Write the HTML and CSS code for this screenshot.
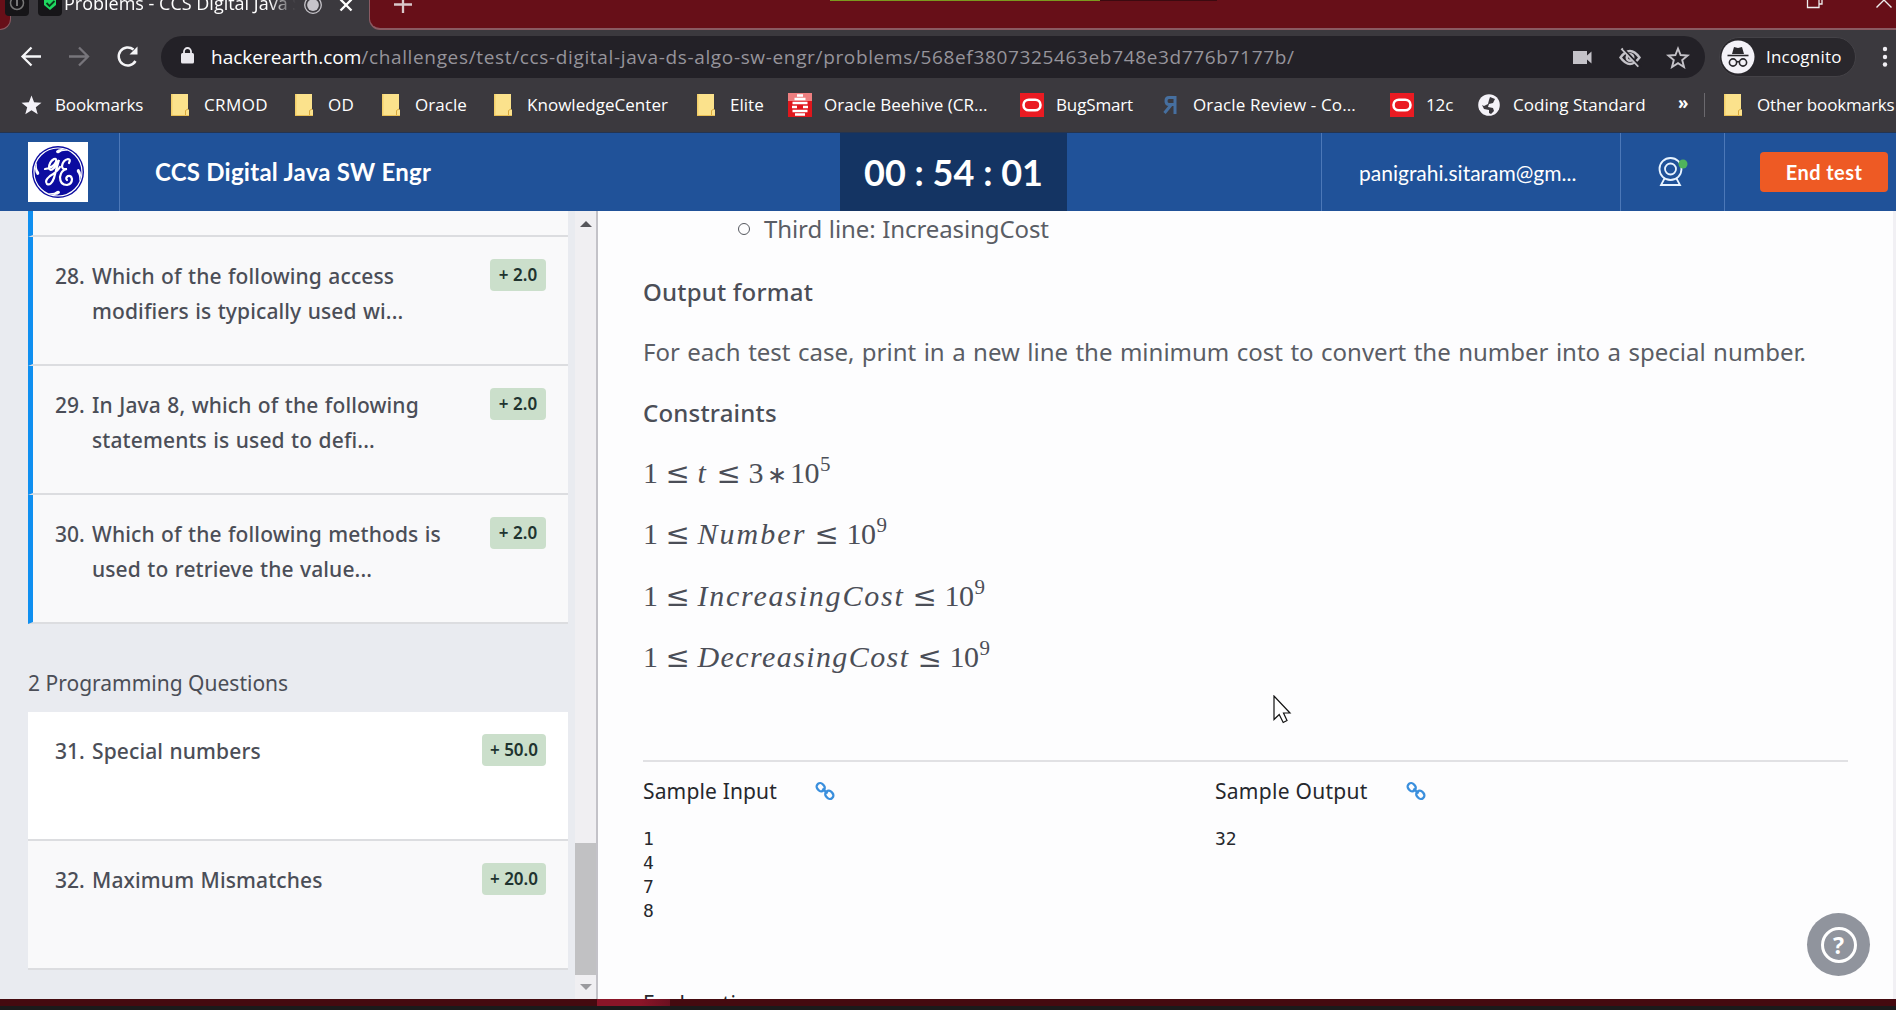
FILE: index.html
```html
<!DOCTYPE html>
<html lang="en">
<head>
<meta charset="utf-8">
<title>Problems - CCS Digital Java SW Engr</title>
<link rel="stylesheet" href="styles.css">
</head>
<body>
<svg class="defs" width="0" height="0" aria-hidden="true">
  <symbol id="folder" viewBox="0 0 24 24"><path d="M3 1h17v15l1 1v6H3z" fill="#fbe28c"/><path d="M3 1h1.500v22H3z" fill="#f3cf6a"/><path d="M3 22h18v1H3z" fill="#e9bf55"/><path d="M17.500 22v-4.500L20 16" fill="none" stroke="#d9a93c"/></symbol>
  <symbol id="oracle" viewBox="0 0 24 24"><path d="M0 0h24v24H0z" fill="#ea1b22"/><rect x="3.500" y="6.700" width="17" height="10.600" rx="5.300" fill="none" stroke="#fff" stroke-width="2.600"/></symbol>
  <symbol id="link" viewBox="0 0 20 20"><g fill="none" stroke="#3a8fdd" stroke-width="2.300"><rect x="2.200" y="1.900" width="7" height="8.600" rx="3.400" transform="rotate(-42 5.700 6.200)"/><rect x="10.800" y="9.500" width="7" height="8.600" rx="3.400" transform="rotate(-42 14.300 13.800)"/><path d="M7.500 7.500l5 5"/></g></symbol>
</svg>

<div class="tabstrip">
  <div class="prev-tab"></div>
  <div class="tab">
    <span class="favicon"><svg width="24" height="24" viewBox="0 0 24 24"><circle cx="12" cy="11" r="6.500" fill="none" stroke="#777" stroke-width="1.500"/><path d="M12 8v6" stroke="#999" stroke-width="1.500"/></svg></span>
    <span class="favicon"><svg width="24" height="24" viewBox="0 0 24 24"><path d="M6 6h12v7l-6 5-6-5z" fill="#1fd860"/><path d="M8.500 11l3 3 5-5" fill="none" stroke="#0b3a1b" stroke-width="1.800"/></svg></span>
    <span class="tab-title">Problems - CCS Digital Java S</span>
    <svg class="rec" width="20" height="20" viewBox="0 0 20 20"><circle cx="10" cy="10" r="8.300" fill="none" stroke="#c6c4ca" stroke-width="1.300"/><circle cx="10" cy="10" r="5.900" fill="#c6c4ca"/></svg>
    <svg class="tab-close" width="14" height="14" viewBox="0 0 14 14"><path d="M1.500 1.500l11 11M12.500 1.500l-11 11" stroke="#fff" stroke-width="2.300"/></svg>
  </div>
  <div class="strip-rest">
    <svg class="plus" width="18" height="18" viewBox="0 0 18 18"><path d="M9 0v17M0 8.500h18" stroke="#d9c8ca" stroke-width="2.300"/></svg>
    <div class="green-line"></div>
    <svg class="win-btns" width="90" height="10" viewBox="0 0 90 10"><path d="M1.500 0v7.500h11.500V0M13 4h3V0" fill="none" stroke="#eee" stroke-width="1.300"/><path d="M70.500 7.500l7.500-7.500 7.500 7.500" fill="none" stroke="#eee" stroke-width="1.400"/></svg>
  </div>
</div>

<div class="toolbar">
  <svg class="nav-btns" width="161" height="42" viewBox="0 0 161 42" fill="none" stroke-width="2.300"><path d="M41 20.500H23M31.500 11.500l-9 9 9 9" stroke="#f5f5f7"/><path d="M69 20.500h18M79 11.500l9 9-9 9" stroke="#77757b"/><path d="M135.500 25a9 9 0 1 1-2-11.500" stroke="#f5f5f7" stroke-width="2.500"/><path d="M137.500 10.500v8h-8z" fill="#f5f5f7"/></svg>
  <div class="omnibox">
    <svg class="lock" width="13" height="17" viewBox="0 0 13 17"><rect y="6" width="13" height="10.500" rx="1.500" fill="#e9e7ed"/><path d="M3 7V4.500a3.500 3.500 0 0 1 7 0V7" fill="none" stroke="#e9e7ed" stroke-width="1.800"/></svg>
    <span class="url"><span class="url-host">hackerearth.com</span><span class="url-path">/challenges/test/ccs-digital-java-ds-algo-sw-engr/problems/568ef3807325463eb748e3d776b7177b/</span></span>
    <svg class="omni-icons" width="120" height="24" viewBox="0 0 120 24" fill="#c4c2c8"><path d="M0 6h14v4.500l4.500-4v12l-4.500-4V19H0z"/><g fill="none" stroke="#c4c2c8" stroke-width="2.400"><path d="M47.500 12.500q9.500-13 19 0-9.500 13-19 0z"/><circle cx="57" cy="12.500" r="3.300"/><path d="M48.500 3.500l17 18"/></g><path d="M50.500 3.500l17 18" stroke="#232127" stroke-width="1.800"/><path d="M105 3.500l2.600 6.500 7 .5-5.400 4.500 1.800 7-6-3.900-6 3.900 1.800-7-5.400-4.500 7-.5z" fill="none" stroke="#c4c2c8" stroke-width="1.900"/></svg>
  </div>
  <div class="incognito">
    <svg width="34" height="34" viewBox="0 0 34 34"><circle cx="17" cy="17" r="16.500" fill="#f4f2f8"/><path d="M11 14l2-7 4 1 4-1 2 7z" fill="#29272c"/><path d="M6.500 15.500h21" stroke="#29272c" stroke-width="1.600"/><g fill="none" stroke="#29272c" stroke-width="1.600"><circle cx="12" cy="22.500" r="3.600"/><circle cx="22" cy="22.500" r="3.600"/><path d="M15.600 22q1.400-1 2.800 0"/></g></svg>
    <span class="incog-text">Incognito</span>
  </div>
  <svg class="menu-dots" width="8" height="24" viewBox="0 0 8 24" fill="#f1eff4"><circle cx="4" cy="4" r="2.200"/><circle cx="4" cy="12" r="2.200"/><circle cx="4" cy="19.500" r="2.200"/></svg>
</div>

<div class="bookmarks">
  <div class="bm"><svg viewBox="0 0 24 24"><path d="M12.500 2.500l2.600 6.700 7.400.5-5.700 4.500 1.900 7-6.200-4-6.200 4 1.900-7-5.700-4.500 7.400-.5z" fill="#f4f2f8"/></svg><span class="tight">Bookmarks</span></div>
  <div class="bm"><svg><use href="#folder"/></svg><span class="loose">CRMOD</span></div>
  <div class="bm"><svg><use href="#folder"/></svg><span class="loose">OD</span></div>
  <div class="bm"><svg><use href="#folder"/></svg><span>Oracle</span></div>
  <div class="bm"><svg><use href="#folder"/></svg><span>KnowledgeCenter</span></div>
  <div class="bm"><svg><use href="#folder"/></svg><span>Elite</span></div>
  <div class="bm"><svg viewBox="0 0 24 24"><path d="M0 0h24v24H0z" fill="#e0161c"/><path d="M0 0h24v8H0z" fill="#ee7f80"/><path d="M9 2.500h6M6.500 6h11M4.500 10h15M4 14h5M15 14h5M4.500 18h15M7 21.500h10" stroke="#fff" stroke-width="2.500"/></svg><span>Oracle Beehive (CR...</span></div>
  <div class="bm"><svg><use href="#oracle"/></svg><span class="tight">BugSmart</span></div>
  <div class="bm"><svg viewBox="0 0 24 24"><path d="M18 3v18M18 4.500h-6q-3 0-3 3.500t3 3.500h6M14 12l-6.500 8" fill="none" stroke="#466f9f" stroke-width="3"/></svg><span class="wide">Oracle Review - Co...</span></div>
  <div class="bm"><svg><use href="#oracle"/></svg><span class="tight">12c</span></div>
  <div class="bm"><svg viewBox="0 0 24 24"><circle cx="12" cy="12" r="10.800" fill="#f4f2f8"/><path d="M13 4l5 2-2 4-4 1-1 3 5 1 1 3-3 3-2-1v-3l-5-1-2-4 2 1 4-2 1-4z" fill="#3a383d"/></svg><span>Coding Standard</span></div>
  <div class="bm-more">»</div>
  <div class="bm bm-other"><svg><use href="#folder"/></svg><span class="tight">Other bookmarks</span></div>
</div>

<header class="header">
  <div class="cell-logo">
    <svg width="60" height="60" viewBox="0 0 60 60"><path d="M0 0h60v60H0z" fill="#fff"/><circle cx="30" cy="30" r="26" fill="#0c0ca0"/><circle cx="30" cy="30" r="24" fill="none" stroke="#fff" stroke-width="1.200"/><g fill="#fff"><path d="M28 9q4-4 13 0-7-1-10 2-3 1-3-2zM51 27q4 5 0 13 1-7-2-10-1-3 2-3zM32 51q-4 4-13 0 7 1 10-2 3-1 3 2zM9 33q-4-5 0-13-1 7 2 10 1 3-2 3z"/></g><g fill="none" stroke="#fff" stroke-width="2.200" stroke-linecap="round"><path d="M17 27q8-1 11-7 1-4-2-3-5 3-5 9 1 4 5 0l5-8q-3 10-5 18-3 8-7 6-3-3 3-8 7-4 10-9"/><path d="M41 21q2-4-1-4-5 1-6 7 0 4 5 3-6 1-7 8 0 8 7 8 5-1 5-6-1-4-4-3-3 2-1 4"/></g></svg>
  </div>
  <div class="cell-title">CCS Digital Java SW Engr</div>
  <div class="cell-timer">00 : 54 : 01</div>
  <div></div>
  <div class="cell-user">panigrahi.sitaram@gm...</div>
  <div class="cell-cam">
    <svg width="30" height="30" viewBox="0 0 30 30" fill="none" stroke="#e9f4ff" stroke-width="1.800"><circle cx="12.500" cy="12" r="11"/><circle cx="12.500" cy="12" r="5.500"/><path d="M6.500 21.500L3 28h19l-3.500-6.500"/><circle cx="25" cy="7" r="4.500" fill="#4fb45c" stroke="none"/></svg>
  </div>
  <div class="cell-end"><button class="end-btn">End test</button></div>
</header>

<div class="page">
  <aside class="sidebar">
    <div class="q-list">
      <div class="q done q-cut"></div>
      <div class="q done"><span class="num">28.</span><p class="q-text">Which of the following access<br>modifiers is typically used wi...</p><span class="badge">+ 2.0</span></div>
      <div class="q done"><span class="num">29.</span><p class="q-text">In Java 8, which of the following<br>statements is used to defi...</p><span class="badge">+ 2.0</span></div>
      <div class="q done"><span class="num">30.</span><p class="q-text">Which of the following methods is<br>used to retrieve the value...</p><span class="badge">+ 2.0</span></div>
      <h3 class="group">2 Programming Questions</h3>
      <div class="q current"><span class="num">31.</span><p class="q-text">Special numbers</p><span class="badge">+ 50.0</span></div>
      <div class="q"><span class="num">32.</span><p class="q-text">Maximum Mismatches</p><span class="badge">+ 20.0</span></div>
    </div>
    <div class="scrollbar"><i class="arrow-up"></i><i class="thumb"></i><i class="arrow-down"></i></div>
  </aside>
  <main class="problem">
    <ul class="fields"><li>Third line: IncreasingCost</li></ul>
    <h4>Output format</h4>
    <p class="para">For each test case, print in a new line the minimum cost to convert the number into a special number.</p>
    <h4>Constraints</h4>
    <div class="math"><b>1</b><u>≤</u><i class="var-t">t</i><u>≤</u><b>3</b><s>∗</s><b>10</b><sup>5</sup></div>
    <div class="math"><b>1</b><u>≤</u><i class="var-n">Number</i><u>≤</u><b>10</b><sup>9</sup></div>
    <div class="math"><b>1</b><u>≤</u><i class="var-i">IncreasingCost</i><u>≤</u><b>10</b><sup>9</sup></div>
    <div class="math"><b>1</b><u>≤</u><i class="var-d">DecreasingCost</i><u>≤</u><b>10</b><sup>9</sup></div>
    <div class="samples">
      <section><h5 class="input-title">Sample Input<svg><use href="#link"/></svg></h5><pre>1
4
7
8</pre></section>
      <section><h5 class="output-title">Sample Output<svg><use href="#link"/></svg></h5><pre>32</pre></section>
    </div>
    <h5 class="explain">Explanation</h5>
  </main>
  <div class="help"><span class="help-ring">?</span></div>
  <svg class="cursor" width="20" height="30" viewBox="0 0 20 30"><path d="M1 1v23.500l5.200-5 4 8 3.800-2-3.500-7.500h6.500z" fill="#fff" stroke="#111" stroke-width="1.200"/></svg>
</div>

<div class="player-bar"><div class="player-mark"></div></div>
<div class="bottom-edge"></div>
</body>
</html>
```
FILE: styles.css
```css
* { box-sizing: border-box; }
body { margin: 0; width: 1896px; height: 1010px; overflow: hidden; background: #fdfdfe; font-family: "Noto Sans", "Open Sans", sans-serif; color: #4b4e57; }
h3, h4, h5, p, ul, pre { margin: 0; padding: 0; font-weight: 400; }
.defs { display: block; height: 0; }

/* browser tab strip */
.tabstrip { display: flex; height: 30px; overflow: hidden; background: #3b393e; font-family: "Open Sans", sans-serif; }
.prev-tab { width: 11px; height: 30px; flex: none; background: #670f18; border: 1px solid #8a5a62; border-width: 0 1px 1px 0; border-radius: 0 0 11px 0; }
.tab { display: flex; align-items: center; width: 358px; height: 40px; margin-top: -16px; flex: none; }
.favicon { width: 24px; height: 24px; margin: -1px 9px 0 0; border-radius: 4px; background: #161518; }
.favicon:first-child { margin-left: -6px; }
.tab-title { flex: none; margin: -2px 0 0 -7px; width: 234px; color: #fff; font-size: 18px; white-space: nowrap; -webkit-mask-image: linear-gradient(90deg, #000 88%, transparent 99%); mask-image: linear-gradient(90deg, #000 88%, transparent 99%); }
.rec { margin: 2px 0 0 5px; }
.tab-close { margin: 2px 0 0 16px; }
.strip-rest { flex: 1; display: flex; background: #670f18; border: 1px solid #8a5a62; border-width: 0 0 2px 1px; border-radius: 0 0 0 11px; }
.plus { margin: -4px 0 0 24px; }
.green-line { width: 387px; height: 1px; margin-left: 418px; background: linear-gradient(90deg, #7c9a1e 270px, #3c0a10 270px); }
.win-btns { margin: 0 0 0 589px; flex: none; }

/* toolbar */
.toolbar { display: flex; align-items: center; height: 54px; padding-bottom: 1px; background: #3b393e; font-family: "Open Sans", sans-serif; font-size: 19px; }
.nav-btns { flex: none; }
.omnibox { display: flex; align-items: center; flex: none; width: 1544px; height: 42px; padding-left: 20px; border-radius: 21px; background: #232127; }
.lock { margin: 0 17px 2px 0; }
.url { width: 1362px; white-space: nowrap; }
.url-host { color: #fff; }
.url-path { color: #96949b; letter-spacing: 0.65px; }
.omni-icons { flex: none; }
.incognito { display: flex; align-items: center; gap: 11px; width: 137px; height: 40px; margin-left: 14px; padding-left: 1px; border-radius: 20px; background: #29272c; border: 1px solid #444247; color: #fff; font-size: 17px; letter-spacing: 0.2px; }
.menu-dots { margin-left: 25px; }

/* bookmarks */
.bookmarks { display: grid; grid-template-columns: 149px 124px 87px 112px 203px 94px 232px 137px 233px 87px 190px 38px 1fr; align-items: center; height: 49px; padding: 0 0 7px 19px; background: #3b393e; border-bottom: 1px solid #25344f; color: #fff; font-family: "Open Sans", sans-serif; font-size: 17px; white-space: nowrap; }
.bm { display: flex; align-items: center; gap: 12px; letter-spacing: 0.03px; }
.bm svg { width: 24px; height: 24px; flex: none; }
.tight { letter-spacing: -0.14px; }
.loose { letter-spacing: 0.4px; }
.wide { letter-spacing: 0.13px; }
.bm-more { height: 24px; line-height: 20px; padding-left: 11px; border-right: 1px solid #6b696e; font-weight: 700; }
.bm-other { padding-left: 16px; }

/* test header */
.header { display: grid; grid-template-columns: 119px 721px 227px 254px 299px 104px 172px; height: 78px; background: #205299; color: #fff; font-family: Lato, "Open Sans", sans-serif; white-space: nowrap; }
.header > div { display: flex; align-items: center; }
.cell-logo { padding-left: 28px; }
.header .cell-title { padding: 0 0 1px 35px; border-left: 1px solid #4c78b8; font-size: 24px; font-weight: 700; letter-spacing: 0.24px; }
.header .cell-timer { justify-content: center; padding-bottom: 1px; background: #143463; font-size: 36px; font-weight: 700; }
.cell-user { padding-left: 37px; border-left: 1px solid #4c78b8; font-size: 21px; }
.cell-cam { padding-left: 37px; border-left: 1px solid #4c78b8; }
.cell-end { padding-left: 35px; border-left: 1px solid #4c78b8; }
.end-btn { width: 128px; height: 40px; padding: 0; border: 0; border-radius: 4px; background: #ee5a24; color: #fff; font: 700 20px Lato, sans-serif; letter-spacing: 0.45px; }

.page { position: relative; display: flex; height: 788px; overflow: hidden; }

/* question list */
.sidebar { display: flex; width: 598px; flex: none; background: #e9ebf0; border-right: 2px solid #c3c2c8; }
.q-list { width: 568px; padding-left: 28px; }
.q { display: flex; align-items: flex-start; height: 129px; padding: 22px 22px 0 27px; background: #f9f9fa; border-bottom: 2px solid #dcdde0; font-size: 21px; font-weight: 500; line-height: 35px; }
.q.done { padding-left: 22px; border-left: 5px solid #0f8ff0; }
.q.q-cut { height: 26px; padding: 0; }
.q.current { background: #fff; }
.num { width: 37px; }
.q-text { flex: 1; font-weight: 500; letter-spacing: 0.12px; word-spacing: 0.8px; white-space: nowrap; }
.badge { min-width: 56px; height: 32px; padding: 0 8px; border-radius: 4px; background: #cbdfcb; color: #20332f; font-size: 17px; font-weight: 600; line-height: 32px; text-align: center; }
.group { height: 88px; padding-top: 42px; font-size: 21px; line-height: 35px; }
.scrollbar { display: flex; flex-direction: column; align-items: center; width: 21px; margin-left: 7px; background: #f0eff2; }
.arrow-up { margin-top: 10px; border: 6px solid transparent; border-top: 0; border-bottom: 6px solid #55555a; }
.thumb { width: 21px; height: 132px; margin-top: 616px; background: #c1c1c3; }
.arrow-down { margin-top: 9px; border: 6px solid transparent; border-bottom: 0; border-top: 6px solid #9a9a9e; }

/* problem statement */
.problem { flex: 1; padding: 0 45px 0 45px; border-right: 3px solid #f1f0f4; background: #fdfdfe; font-size: 24px; }
.fields { list-style: none; padding-left: 95px; color: #5a5d65; line-height: 36px; letter-spacing: -0.1px; }
.fields li { display: flex; align-items: center; gap: 14px; word-spacing: 0.6px; }
.fields li::before { content: ""; width: 10px; height: 10px; border: 1.500px solid #55585f; border-radius: 50%; }
h4 { font-size: 24px; font-weight: 500; letter-spacing: 0.2px; line-height: 36px; margin-top: 27px; }
.para { margin-top: 24px; color: #5a5d65; line-height: 36px; word-spacing: 1.21px; white-space: nowrap; }
.para + h4 { margin-top: 25px; }
.math { display: flex; align-items: baseline; height: 36px; margin-top: 25.500px; font-family: "Liberation Serif", serif; font-size: 30px; line-height: 36px; white-space: nowrap; }
h4 + .math { margin-top: 23.500px; }
.math b, .math s, .math u { font-weight: 400; text-decoration: none; }
.math b { letter-spacing: -0.5px; }
.math u { width: 24px; margin: 0 8px; font-family: "DejaVu Serif", serif; font-size: 29px; line-height: 1; text-align: center; }
.math s { width: 27px; font-size: 24px; text-align: center; }
.math sup { font-size: 21px; line-height: 1; position: relative; top: -12px; margin-left: 1px; }
.var-t { width: 11px; }
.var-n { letter-spacing: 2.05px; }
.var-i { letter-spacing: 1.77px; }
.var-d { letter-spacing: 1.41px; }
.samples { display: grid; grid-template-columns: 572px 1fr; height: 228px; margin-top: 85px; border-top: 2px solid #e1e1e4; color: #26282d; }
h5 { display: flex; align-items: center; font-size: 21px; line-height: 30px; color: #26282d; }
.samples h5 { padding-top: 14px; }
.input-title { letter-spacing: 0.15px; }
.output-title, .explain { letter-spacing: 0.28px; }
h5 svg { width: 20px; height: 20px; margin-left: 38px; }
pre { margin-top: 21px; font-family: "DejaVu Sans Mono", monospace; font-size: 18px; line-height: 24px; }

.help { position: absolute; left: 1807px; top: 702px; display: flex; align-items: center; justify-content: center; width: 63px; height: 63px; border-radius: 50%; background: #90949d; }
.help-ring { width: 36px; height: 36px; border: 3px solid #fff; border-radius: 50%; color: #fff; font-size: 23px; font-weight: 700; line-height: 30px; text-align: center; }
.cursor { position: absolute; left: 1273px; top: 484px; }

.player-bar { height: 7px; padding-left: 597px; background: #450a10; }
.player-mark { width: 73px; height: 7px; background: linear-gradient(90deg, #8b1528 60%, #6b1020); }
.bottom-edge { height: 4px; background: #1b1a1b; }
```
